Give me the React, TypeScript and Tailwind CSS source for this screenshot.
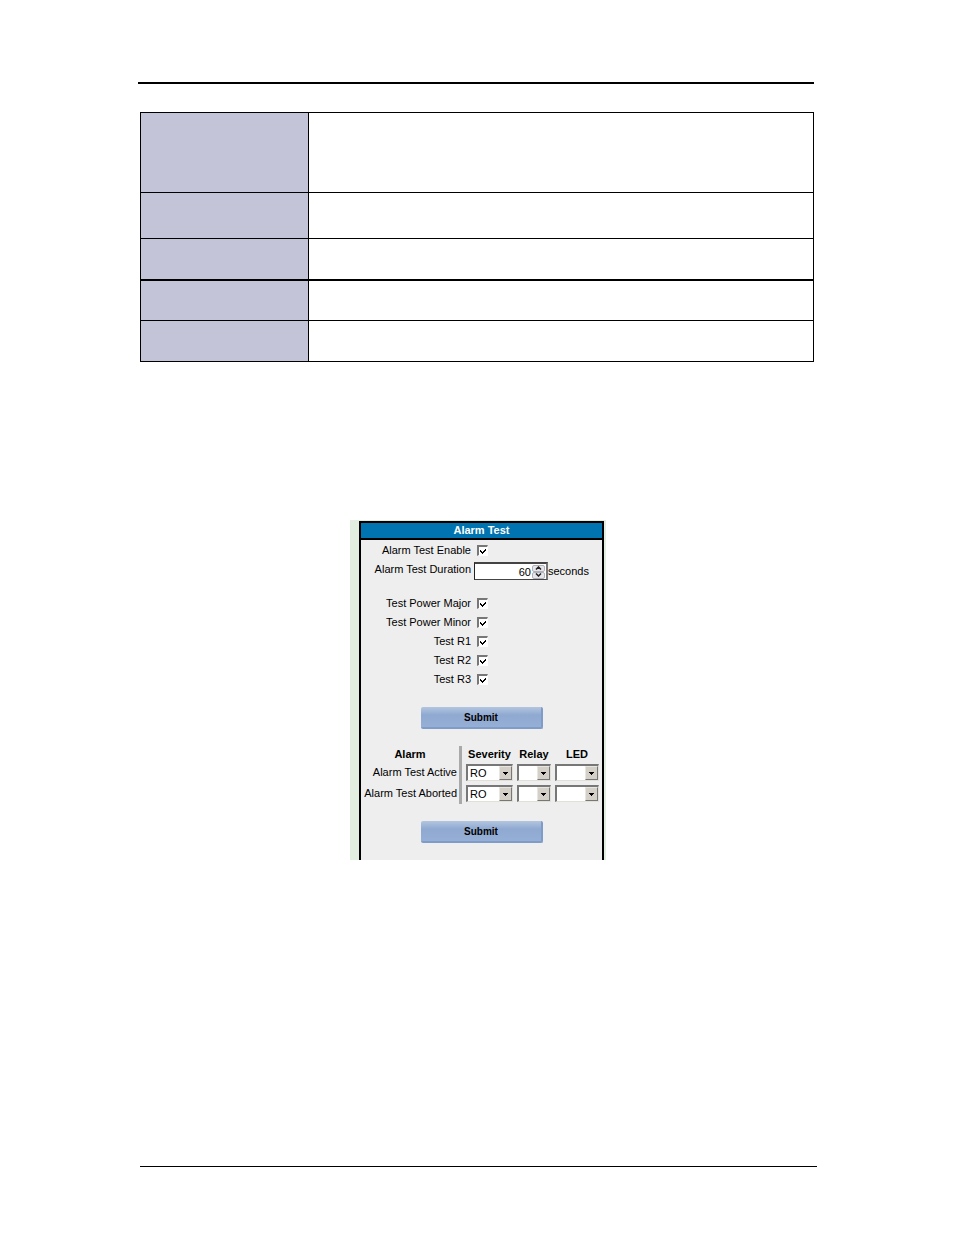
import React from "react";

interface Check {
    id: string;
    label: string;
}

const TESTS: Check[] = [
    { id: "power-major", label: "Test Power Major" },
    { id: "power-minor", label: "Test Power Minor" },
    { id: "r1", label: "Test R1" },
    { id: "r2", label: "Test R2" },
    { id: "r3", label: "Test R3" },
];

const ALARMS = ["Alarm Test Active", "Alarm Test Aborted"];

const SPEC_ROWS = ["h-[80px]", "h-[46px]", "h-[42px] border-b-2", "h-[40px]", "h-[41px]"];

const CheckRow: React.FC<Check & { className: string }> = ({ id, label, className }) => (
    <div className={`grid grid-cols-[110px_1fr] items-center ${className}`}>
        <label htmlFor={id} className="text-right">{label}</label>
        <span className="relative ml-[6px] size-[11px]">
            <input
                id={id}
                type="checkbox"
                defaultChecked
                className="peer block size-[11px] appearance-none border-t-2 border-r border-b border-l-2 border-t-[#777] border-l-[#777] border-r-white border-b-white bg-white"
            />
            <svg
                viewBox="0 0 11 11"
                className="pointer-events-none absolute inset-0 hidden size-[11px] peer-checked:block"
                shapeRendering="crispEdges"
                aria-hidden="true"
            >
                <path d="M3 5h1v1h1v1h1v-1h1v-1h1v-1h1v2h-1v1h-1v1h-1v1h-1v-1h-1v-1h-1z" fill="#000" />
            </svg>
        </span>
    </div>
);

const SubmitButton: React.FC<{ className: string }> = ({ className }) => (
    <button
        type="submit"
        className={`ml-[60px] block h-[22px] w-[122px] rounded-[2px] border-r-2 border-b-2 border-r-[#7f9bc8] border-b-[#7f9bc8] bg-linear-to-b from-[#b3c6e0] via-[#8fa9d0] via-40% to-[#95afd6] text-[10px] font-bold text-black ${className}`}
    >
        Submit
    </button>
);

const Dropdown: React.FC<{ label: string; value?: string; className: string }> = ({ label, value = "", className }) => (
    <div className={`relative h-[17px] ${className}`}>
        <select
            aria-label={label}
            defaultValue={value}
            className="block h-full w-full appearance-none border-t-2 border-l-2 border-r border-b border-t-[#777] border-l-[#777] border-r-[#e2dfd8] border-b-[#e2dfd8] bg-white pl-[2px] text-[11px] leading-[14px] text-black"
        >
            <option value={value}>{value}</option>
        </select>
        <span className="pointer-events-none absolute top-[2px] right-[1px] flex h-[14px] w-[13px] items-center justify-center border border-t-[#e8e6e0] border-l-[#e8e6e0] border-r-[#777] border-b-[#777] bg-[#d4d0c8]">
            <svg viewBox="0 0 5 3" className="h-[3px] w-[5px]" shapeRendering="crispEdges" aria-hidden="true">
                <path d="M0 0h5v1h-1v1h-1v1h-1v-1h-1v-1h-1z" fill="#000" />
            </svg>
        </span>
    </div>
);

const SpinButton: React.FC<{ label: string; path: string }> = ({ label, path }) => (
    <button
        type="button"
        aria-label={label}
        className="flex h-[7px] w-[13px] items-center justify-center rounded-[2px] border border-[#b0b0bc] bg-[#e6e6ea]"
    >
        <svg viewBox="0 0 7 4" className="h-[4px] w-[7px]" aria-hidden="true">
            <path d={path} fill="none" stroke="#222" strokeWidth="1.5" />
        </svg>
    </button>
);

const AlarmTestPanel: React.FC = () => (
    <div className="mx-auto mt-[158px] w-[256px] bg-[#e2eee0] pt-px pr-[2px] pl-[9px]">
        <form
            onSubmit={(e) => e.preventDefault()}
            className="border-x-2 border-t-2 border-black bg-[#eee] pb-[17px] text-[11px] leading-[15px] text-black"
        >
            <h2 className="border-b-2 border-black bg-[#0074b0] text-center font-bold text-white">Alarm Test</h2>

            <CheckRow id="enable" label="Alarm Test Enable" className="h-[21px]" />
            <div className="mt-px grid h-[18px] grid-cols-[110px_1fr]">
                <label htmlFor="duration" className="text-right">Alarm Test Duration</label>
                <div className="ml-[3px] flex">
                    <div className="flex w-[74px] items-center border-t-2 border-r-2 border-b border-l border-t-[#444] border-l-[#222] border-r-[#777] border-b-[#444] bg-white pr-px">
                        <input
                            id="duration"
                            type="number"
                            defaultValue={60}
                            className="min-w-0 flex-1 appearance-none pr-px text-right leading-[14px] [-moz-appearance:textfield] [&::-webkit-inner-spin-button]:appearance-none"
                        />
                        <span className="flex flex-col">
                            <SpinButton label="Increase" path="M1 3.5 3.5 1 6 3.5" />
                            <SpinButton label="Decrease" path="M1 .5 3.5 3 6 .5" />
                        </span>
                    </div>
                    <span className="leading-[18px]">seconds</span>
                </div>
            </div>

            <div className="mt-[14px]">
                {TESTS.map((t) => (
                    <CheckRow key={t.id} {...t} className="h-[19px]" />
                ))}
            </div>

            <SubmitButton className="mt-[18px]" />

            <table className="mt-[17px] border-separate border-spacing-0">
                <thead>
                    <tr className="h-[16px]">
                        <th className="w-[101px] border-r-[3px] border-[#a9a9a9] p-0">Alarm</th>
                        <th className="p-0 pl-1">Severity</th>
                        <th className="p-0 pl-1">Relay</th>
                        <th className="p-0 pl-1">LED</th>
                    </tr>
                </thead>
                <tbody>
                    {ALARMS.map((name) => (
                        <tr key={name} className="h-[21px]">
                            <th className="border-r-[3px] border-[#a9a9a9] p-0 pr-[2px] text-right font-normal whitespace-nowrap">{name}</th>
                            <td className="p-0 pl-1"><Dropdown label={`${name} severity`} value="RO" className="w-[47px]" /></td>
                            <td className="p-0 pl-1"><Dropdown label={`${name} relay`} className="w-[34px]" /></td>
                            <td className="p-0 pl-1"><Dropdown label={`${name} LED`} className="w-[44px]" /></td>
                        </tr>
                    ))}
                </tbody>
            </table>

            <SubmitButton className="mt-[17px]" />
        </form>
    </div>
);

const App: React.FC = () => (
    <div className="flex min-h-screen flex-col bg-white pt-[82px] pr-[136px] pb-[68px] pl-[138px] font-['Liberation_Sans',Arial,sans-serif]">
        <header className="mr-1 border-b-2 border-black" />

        <main>
            <div className="mt-[28px] mr-1 ml-[2px]">
                <table className="w-full table-fixed border-separate border-spacing-0 border-t border-l border-black">
                    <tbody>
                        {SPEC_ROWS.map((row) => (
                            <tr key={row}>
                                <th className={`w-[168px] border-r border-b border-black bg-[#c4c4d9] p-0 ${row}`} />
                                <td className={`border-r border-b border-black p-0 ${row}`} />
                            </tr>
                        ))}
                    </tbody>
                </table>
            </div>

            <AlarmTestPanel />
        </main>

        <footer className="mt-auto mr-px ml-[2px] border-t border-black" />
    </div>
);

export default App;
